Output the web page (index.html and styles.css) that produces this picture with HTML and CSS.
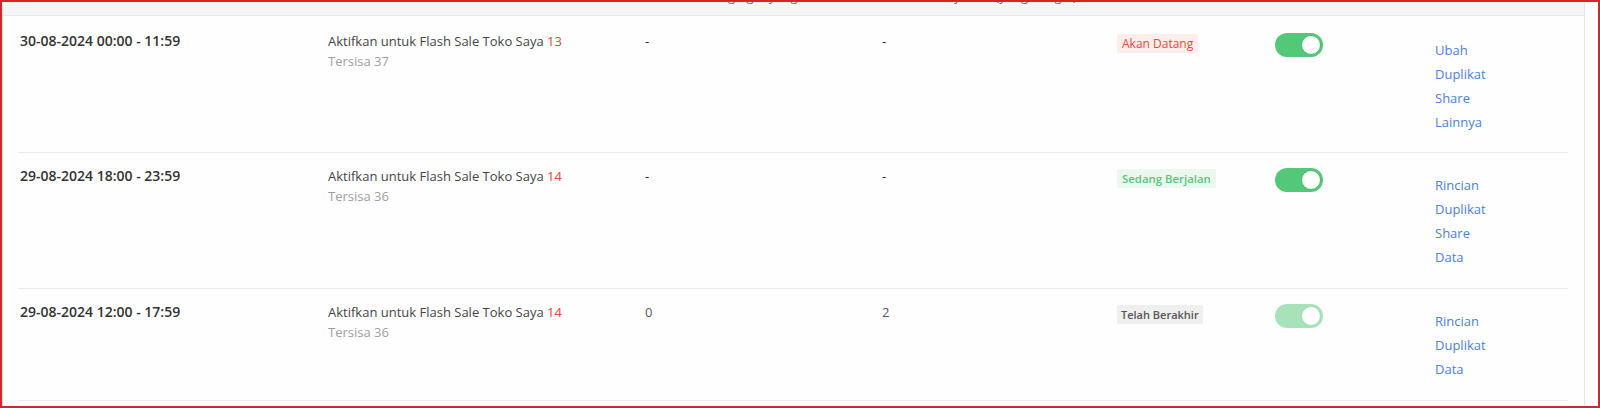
FILE: index.html
```html
<!DOCTYPE html>
<html lang="id">
<head>
<meta charset="utf-8">
<title>Flash Sale Toko Saya</title>
<link rel="stylesheet" href="styles.css">
</head>
<body>
<div class="frame">
  <div class="panel">
    <div class="thead">
      <div class="grid head-grid">
        <span>Periode Waktu</span>
        <span>Produk</span>
        <span class="h-pengingat">Pengingat yang diatur</span>
        <span class="h-sales">Penjualan (yang ditagih)</span>
        <span>Status</span>
        <span>Aktifkan/Nonaktifkan</span>
        <span>Aksi</span>
      </div>
    </div>
    <div class="tbody">
      <div class="row grid row-first">
        <div class="date">30-08-2024 00:00 - 11:59</div>
        <div class="prod">
          <div class="name">Aktifkan untuk Flash Sale Toko Saya <span class="count">13</span></div>
          <div class="left">Tersisa 37</div>
        </div>
        <div class="val dash">-</div>
        <div class="val dash">-</div>
        <div><span class="badge badge-upcoming">Akan Datang</span></div>
        <div><span class="toggle"><span class="knob"></span></span></div>
        <div class="actions">
          <a href="#">Ubah</a>
          <a href="#">Duplikat</a>
          <a href="#">Share</a>
          <a href="#">Lainnya</a>
        </div>
      </div>
      <div class="row grid">
        <div class="date">29-08-2024 18:00 - 23:59</div>
        <div class="prod">
          <div class="name">Aktifkan untuk Flash Sale Toko Saya <span class="count">14</span></div>
          <div class="left">Tersisa 36</div>
        </div>
        <div class="val dash">-</div>
        <div class="val dash">-</div>
        <div><span class="badge badge-ongoing">Sedang Berjalan</span></div>
        <div><span class="toggle"><span class="knob"></span></span></div>
        <div class="actions">
          <a href="#">Rincian</a>
          <a href="#">Duplikat</a>
          <a href="#">Share</a>
          <a href="#">Data</a>
        </div>
      </div>
      <div class="row grid">
        <div class="date">29-08-2024 12:00 - 17:59</div>
        <div class="prod">
          <div class="name">Aktifkan untuk Flash Sale Toko Saya <span class="count">14</span></div>
          <div class="left">Tersisa 36</div>
        </div>
        <div class="val">0</div>
        <div class="val">2</div>
        <div><span class="badge badge-ended">Telah Berakhir</span></div>
        <div><span class="toggle toggle-disabled"><span class="knob"></span></span></div>
        <div class="actions">
          <a href="#">Rincian</a>
          <a href="#">Duplikat</a>
          <a href="#">Data</a>
        </div>
      </div>
    </div>
  </div>
</div>
</body>
</html>
```

FILE: styles.css
```css
* { box-sizing: border-box; }

html, body {
  margin: 0;
  padding: 0;
  background: #ffffff;
}

body {
  font-family: "Open Sans", "Noto Sans", sans-serif;
  font-size: 13px;
  color: #333333;
}

.frame {
  width: 1600px;
  height: 408px;
  border: 2px solid #d3262b;
  overflow: hidden;
  display: flex;
  background: #ffffff;
}

.panel {
  width: 1583px;
  height: 100%;
  border-left: 1px solid #e6e6e6;
  border-right: 1px solid #e6e6e6;
  background: #fefefe;
}

.thead {
  height: 14px;
  background: #f5f5f5;
  border-bottom: 1px solid #e9e9e9;
  overflow: hidden;
  padding: 0 16px 0 15px;
}

.grid {
  display: grid;
  grid-template-columns: 308px 317px 237px 235px 158px 160px 1fr;
  padding-left: 2px;
}

.head-grid {
  margin-top: -14px;
  line-height: 16px;
  color: #666666;
  font-size: 13px;
}

.h-pengingat {
  padding-left: 60px;
}

.h-sales {
  padding-left: 50px;
}

.tbody {
  padding: 0 16px 0 15px;
}

.row {
  padding: 13px 0 19px 2px;
  border-bottom: 1px solid #ececec;
  line-height: 20px;
}

.row-first {
  padding-top: 15px;
  padding-bottom: 18px;
}

.date {
  font-size: 14px;
  font-weight: 600;
  color: #333333;
}

.name {
  color: #444444;
}

.count {
  color: #e4473a;
}

.left {
  color: #9e9e9e;
}

.val {
  color: #555555;
}

.dash {
  color: #222222;
}

.badge {
  display: inline-block;
  margin-top: 3px;
  padding: 0 5px;
  font-size: 12px;
  line-height: 19px;
  border-radius: 2px;
}

.badge-upcoming {
  color: #e5493b;
  background: #fdeeec;
}

.badge-ongoing {
  color: #5cc37d;
  background: #ebf8ef;
  font-weight: 600;
  font-size: 11.4px;
}

.badge-ended {
  color: #555555;
  background: #efefef;
  font-weight: 600;
  font-size: 11px;
  padding: 0 4px;
}

.toggle {
  display: flex;
  justify-content: flex-end;
  align-items: center;
  width: 48px;
  height: 24px;
  margin-top: 2px;
  padding: 0 2px;
  border-radius: 12px;
  background: #52c878;
}

.knob {
  width: 20px;
  height: 20px;
  border-radius: 50%;
  background: #ffffff;
  border: 1px solid #47ba6b;
}

.toggle-disabled {
  opacity: 0.5;
}

.actions {
  display: flex;
  flex-direction: column;
  margin-top: 7px;
  line-height: 24px;
}

.actions a {
  color: #4d80d6;
  text-decoration: none;
}
```
